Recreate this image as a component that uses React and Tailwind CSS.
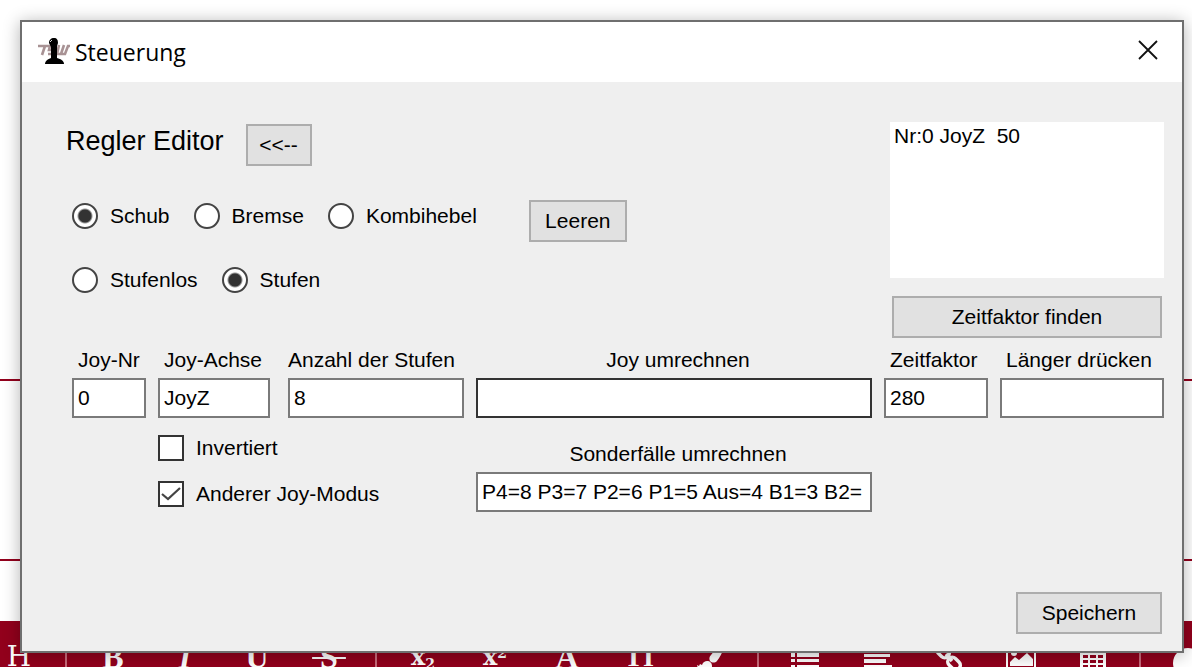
import React from 'react';

const BrushIcon = () => (
  <svg viewBox="0 0 32 32" className="size-8" fill="currentColor" aria-hidden="true">
    <path d="M29 3c1 1 1 2 0 4-2 5-4 9-7 13-2 2-5 2-7 0-1-2-1-4 1-6 3-4 7-8 11-11 1-1 2-1 2 0z" />
    <path d="M12 20c3 0 5 2 5 5 0 4-3 6-7 6-5 0-7-2-8-7l2 1 1-2 2 1c1-3 3-4 5-4z" />
  </svg>
);

const ListIcon = () => (
  <svg viewBox="0 0 32 32" className="size-8" fill="currentColor" aria-hidden="true">
    <path d="M2 6h4v4H2zM8 6h22v4H8zM2 12h4v4H2zM8 12h22v4H8zM2 18h4v3H2zM8 18h22v3H8zM2 24h4v4H2zM8 24h22v4H8z" />
  </svg>
);

const AlignIcon = () => (
  <svg viewBox="0 0 32 32" className="size-8" fill="currentColor" aria-hidden="true">
    <path d="M3 6h28v4H3zM3 13h26v3H3zM3 18h22v4H3zM3 24h28v4H3z" />
  </svg>
);

const LinkIcon = () => (
  <svg viewBox="0 0 32 32" className="size-8" fill="none" stroke="currentColor" strokeWidth="3.5" aria-hidden="true">
    <rect x="3" y="6" width="14" height="9" rx="4.5" transform="rotate(45 10 10.5)" />
    <rect x="14" y="18" width="14" height="9" rx="4.5" transform="rotate(45 21 22.5)" />
    <path d="M13 13l6 7" />
  </svg>
);

const ImageIcon = () => (
  <svg viewBox="0 0 32 32" className="size-8" aria-hidden="true">
    <rect x="2" y="5" width="28" height="22" fill="none" stroke="currentColor" strokeWidth="2" />
    <circle cx="9" cy="12" r="3" fill="currentColor" />
    <path d="M5 25v-4l5-5 4 3 8-7 6 6v7z" fill="currentColor" />
  </svg>
);

const TableIcon = () => (
  <svg viewBox="0 0 32 32" className="size-8" aria-hidden="true">
    <path d="M3 3h26v25H3z" fill="currentColor" />
    <path
      d="M6 14h5v3H6zM13 14h6v3h-6zM21 14h5v3h-5zM6 19h5v3H6zM13 19h6v3h-6zM21 19h5v3h-5zM6 24h5v2H6zM13 24h6v2h-6zM21 24h5v2h-5z"
      fill="#92001c"
    />
  </svg>
);

const SmileyIcon = () => (
  <svg viewBox="0 0 32 32" className="size-8" aria-hidden="true">
    <circle cx="17" cy="22" r="15" fill="currentColor" />
  </svg>
);

const toolGroups = [
  [{ name: 'Heading', glyph: 'H' }],
  [
    { name: 'Bold', glyph: <b className="font-['Liberation_Serif',serif] text-[32px]">B</b> },
    { name: 'Italic', glyph: <b className="font-['Liberation_Serif',serif] text-[32px] italic">I</b> },
    { name: 'Underline', glyph: <b className="font-['Liberation_Serif',serif] text-[32px]">U</b> },
    { name: 'Strike', glyph: <b className="font-['Liberation_Serif',serif] text-[32px] line-through decoration-2">&nbsp;S&nbsp;</b> },
  ],
  [
    { name: 'Subscript', glyph: <b className="text-2xl">x<sub className="text-sm">2</sub></b> },
    { name: 'Superscript', glyph: <b className="text-2xl">x<sup className="text-sm">2</sup></b> },
    { name: 'Color', glyph: <b className="font-['Liberation_Serif',serif] text-[32px]">A</b> },
    { name: 'Size', glyph: <b className="font-['Liberation_Serif',serif] text-[28px]">TI</b> },
    { name: 'Brush', glyph: <BrushIcon /> },
  ],
  [
    { name: 'List', glyph: <ListIcon /> },
    { name: 'Align', glyph: <AlignIcon /> },
    { name: 'Link', glyph: <LinkIcon /> },
    { name: 'Image', glyph: <ImageIcon /> },
    { name: 'Table', glyph: <TableIcon /> },
  ],
  [{ name: 'Smiley', glyph: <SmileyIcon /> }],
];

const Toolbar = () => (
  <div className="-ml-[17px] flex h-[72px] shrink-0 items-center bg-[#92001c]">
    {toolGroups.map((group, index) => (
      <React.Fragment key={index}>
        {index > 0 && (
          <span className="flex w-[22px] shrink-0 justify-center">
            <span className="h-10 w-[2px] bg-[#c96a7b]" />
          </span>
        )}
        {group.map((tool) => (
          <button
            key={tool.name}
            aria-label={tool.name}
            className="flex h-10 w-[72px] shrink-0 items-center justify-center font-['DejaVu_Serif',serif] text-[28px] leading-none text-white"
          >
            {tool.glyph}
          </button>
        ))}
      </React.Fragment>
    ))}
  </div>
);

const Backdrop = () => (
  <div className="absolute inset-0 flex flex-col overflow-hidden" aria-hidden="true">
    <div className="h-[379px] shrink-0" />
    <div className="h-[182px] shrink-0 border-y-2 border-[#92001c]" />
    <div className="h-[60px] shrink-0" />
    <Toolbar />
  </div>
);

const AppIcon = () => (
  <svg viewBox="0 0 32 28" className="h-7 w-8" aria-hidden="true">
    <g fill="none" stroke="#a89294" strokeWidth="2.6">
      <path d="M0 8h11M7 8l-3 9M16 8h-4l-1 4h4l-1 4h-4" />
      <path d="M21 7l-2 9h4l3-9M23 16h4l3-8h2" />
    </g>
    <path d="M11 5c0-3 2-5 5-5s4 2 4 5l-1 3v12h-6V9z" />
    <path d="M12 4l2-2" stroke="#ddd" />
    <path d="M7 26c0-3 3-5 6-6h6c4 1 7 3 7 6z" />
  </svg>
);

const Button = ({ className, children }) => (
  <button className={`h-[42px] border-2 border-[#adadad] bg-[#e1e1e1] ${className}`}>{children}</button>
);

const Radio = ({ name, label, defaultChecked }) => (
  <label className="flex items-center gap-3">
    <input
      type="radio"
      name={name}
      defaultChecked={defaultChecked}
      className="size-[26px] appearance-none rounded-full border-2 border-[#444] bg-white checked:bg-[radial-gradient(circle,#333_0_6px,#fff_8px)]"
    />
    {label}
  </label>
);

const Field = ({ id, label, value = '', className = '', labelClass = 'pl-[6px]', focused }) => (
  <div className={`flex flex-col gap-1 ${className}`}>
    <label htmlFor={id} className={`whitespace-nowrap ${labelClass}`}>{label}</label>
    <input
      id={id}
      defaultValue={value}
      className={`h-10 w-full border-2 bg-white px-1 outline-none ${focused ? 'border-[#333]' : 'border-[#7a7a7a]'}`}
    />
  </div>
);

const Checkbox = ({ label, defaultChecked }) => (
  <label className="flex items-center gap-3">
    <span className="grid">
      <input
        type="checkbox"
        defaultChecked={defaultChecked}
        className="peer col-start-1 row-start-1 size-[26px] appearance-none border-2 border-[#333] bg-white"
      />
      <svg viewBox="0 0 26 26" className="pointer-events-none invisible col-start-1 row-start-1 size-[26px] peer-checked:visible">
        <path d="M4 13l6 5L22 7" fill="none" stroke="#444" strokeWidth="2.2" />
      </svg>
    </span>
    {label}
  </label>
);

const App = () => (
  <main className="relative h-screen overflow-hidden bg-white">
    <Backdrop />
    <section className="relative mt-5 mr-2 ml-5 border-2 border-[#6f6f6f] bg-[#efefef] font-['Liberation_Sans',Arial,sans-serif] text-[21px] leading-7 text-black shadow-[0_2px_16px_rgba(0,0,0,0.3)]">
      <header className="flex h-[60px] items-center bg-white pr-5 pl-4">
        <AppIcon />
        <h1 className="ml-[5px] flex-1 font-['Open_Sans','Noto_Sans',sans-serif] text-[23px]">Steuerung</h1>
        <button aria-label="Schließen" className="mb-1 grid size-7 place-items-center">
          <svg viewBox="0 0 20 20" className="size-5" stroke="#111" strokeWidth="1.8">
            <path d="M1 1l18 18M19 1L1 19" />
          </svg>
        </button>
      </header>

      <div className="pt-10 pr-[18px] pb-[17px] pl-[50px]">
        <div className="flex justify-between">
          <div>
            <div className="flex gap-[22px] pt-[2px]">
              <h2 className="-ml-[6px] text-[27px] leading-[34px]">Regler Editor</h2>
              <Button className="w-[66px]">&lt;&lt;--</Button>
            </div>
            <div className="mt-[34px] flex items-start">
              <div className="flex gap-6 pt-[2px]">
                <Radio name="hebel" label="Schub" defaultChecked />
                <Radio name="hebel" label="Bremse" />
                <Radio name="hebel" label="Kombihebel" />
              </div>
              <Button className="ml-[52px] w-[98px]">Leeren</Button>
            </div>
            <div className="mt-6 flex gap-6">
              <Radio name="art" label="Stufenlos" />
              <Radio name="art" label="Stufen" defaultChecked />
            </div>
          </div>
          <div className="flex w-[274px] flex-col gap-[18px]">
            <ul className="h-[156px] bg-white px-1">
              <li className="whitespace-pre">Nr:0 JoyZ  50</li>
            </ul>
            <Button className="mx-[2px]">Zeitfaktor finden</Button>
          </div>
        </div>

        <div className="mt-2 flex items-start gap-3">
          <div>
            <div className="flex">
              <Field id="joy-nr" label="Joy-Nr" value="0" className="w-[74px]" />
              <Field id="joy-achse" label="Joy-Achse" value="JoyZ" className="ml-3 w-[112px]" />
              <Field id="stufen" label="Anzahl der Stufen" value="8" className="ml-[18px] w-[176px]" labelClass="" />
            </div>
            <div className="mt-4 ml-[86px] flex flex-col gap-[18px]">
              <Checkbox label="Invertiert" />
              <Checkbox label="Anderer Joy-Modus" defaultChecked />
            </div>
          </div>
          <div className="flex flex-1 flex-col gap-[22px]">
            <Field id="umrechnen" label="Joy umrechnen" labelClass="pl-2 text-center" focused />
            <Field
              id="sonderfaelle"
              label="Sonderfälle umrechnen"
              value="P4=8 P3=7 P2=6 P1=5 Aus=4 B1=3 B2="
              labelClass="pl-2 text-center"
            />
          </div>
          <Field id="zeitfaktor" label="Zeitfaktor" value="280" className="w-[104px]" />
          <Field id="druecken" label="Länger drücken" className="w-[164px]" />
        </div>

        <div className="mt-20 flex justify-end pr-[2px]">
          <Button className="w-[146px]">Speichern</Button>
        </div>
      </div>
    </section>
  </main>
);

export default App;
